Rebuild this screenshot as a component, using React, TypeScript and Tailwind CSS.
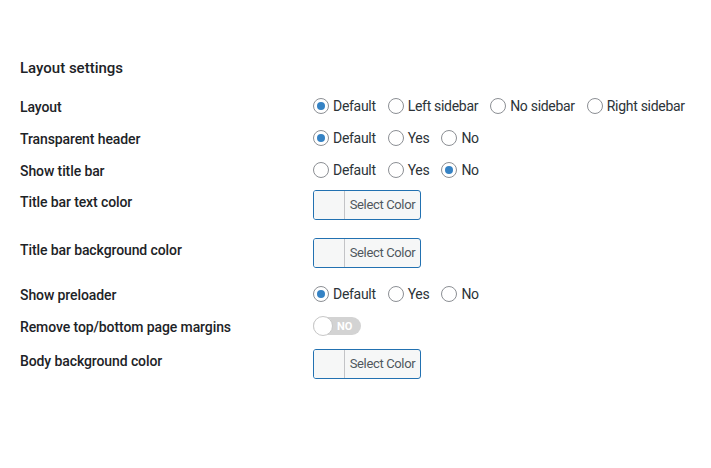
import { ReactNode } from "react";

type Opt = { label: string; checked?: boolean };

// 单选按钮
const Radio = ({ label, checked }: Opt) => (
  <label className="flex items-center mr-3 last:mr-0">
    <span className="w-4 h-4 rounded-full border border-[#8c8f94] bg-white flex items-center justify-center">
      {checked && <span className="w-2 h-2 rounded-full bg-[#3582c4]" />}
    </span>
    <span className="ml-1 text-[14px] tracking-[-0.3px] text-[#2c3338]">{label}</span>
  </label>
);

const RadioGroup = ({ options }: { options: Opt[] }) => (
  <div className="flex items-center">
    {options.map((o) => (
      <Radio key={o.label} {...o} />
    ))}
  </div>
);

const ColorButton = () => (
  <button className="flex h-[30px] w-[108px] rounded-[3px] border border-[#2271b1] bg-[#f6f7f7] overflow-hidden">
    <span className="w-[30px] h-full bg-[#f6f7f7]" />
    <span className="flex-1 h-full border-l border-[#c3c4c7] flex items-center justify-center text-[13px] tracking-[-0.35px] text-[#50575e]">
      Select Color
    </span>
  </button>
);

const Toggle = () => (
  <div className="relative w-12 h-[18px] rounded-full bg-[#d3d3d3] flex items-center">
    <span className="absolute left-0 top-1/2 -translate-y-1/2 w-5 h-5 rounded-full bg-white border border-[#c8c8c8]" />
    <span className="ml-[24px] text-[11px] font-bold text-white leading-none">NO</span>
  </div>
);

const Row = ({
  label,
  children,
  className = "",
  top = false,
}: {
  label: string;
  children: ReactNode;
  className?: string;
  top?: boolean;
}) => (
  <div className={`flex ${top ? "items-start" : "items-center h-8"} ${className}`}>
    <div
      className={`w-[293px] shrink-0 text-[14px] font-medium tracking-[-0.1px] text-[#1d2327] leading-5 ${top ? "pt-[2px]" : "pt-px"}`}
    >
      {label}
    </div>
    <div>{children}</div>
  </div>
);

const yesNo = (sel: string): Opt[] =>
  ["Default", "Yes", "No"].map((l) => ({ label: l, checked: l === sel }));

export default function App() {
  return (
    <div
      className="w-[711px] h-[468px] bg-white pl-5 pt-[58px]"
      style={{ fontFamily: "Roboto, 'Liberation Sans', sans-serif" }}
    >
      <h2 className="text-[15px] font-medium text-[#1d2327] leading-5 mb-3">Layout settings</h2>

      <Row label="Layout">
        <RadioGroup
          options={[
            { label: "Default", checked: true },
            { label: "Left sidebar" },
            { label: "No sidebar" },
            { label: "Right sidebar" },
          ]}
        />
      </Row>
      <Row label="Transparent header">
        <RadioGroup options={yesNo("Default")} />
      </Row>
      <Row label="Show title bar">
        <RadioGroup options={yesNo("No")} />
      </Row>
      <Row label="Title bar text color" top className="mt-[4px]">
        <ColorButton />
      </Row>
      <Row label="Title bar background color" top className="mt-[18px]">
        <ColorButton />
      </Row>
      <Row label="Show preloader" className="mt-[10px]">
        <RadioGroup options={yesNo("Default")} />
      </Row>
      <Row label="Remove top/bottom page margins">
        <Toggle />
      </Row>
      <Row label="Body background color" top className="mt-[7px]">
        <ColorButton />
      </Row>
    </div>
  );
}
